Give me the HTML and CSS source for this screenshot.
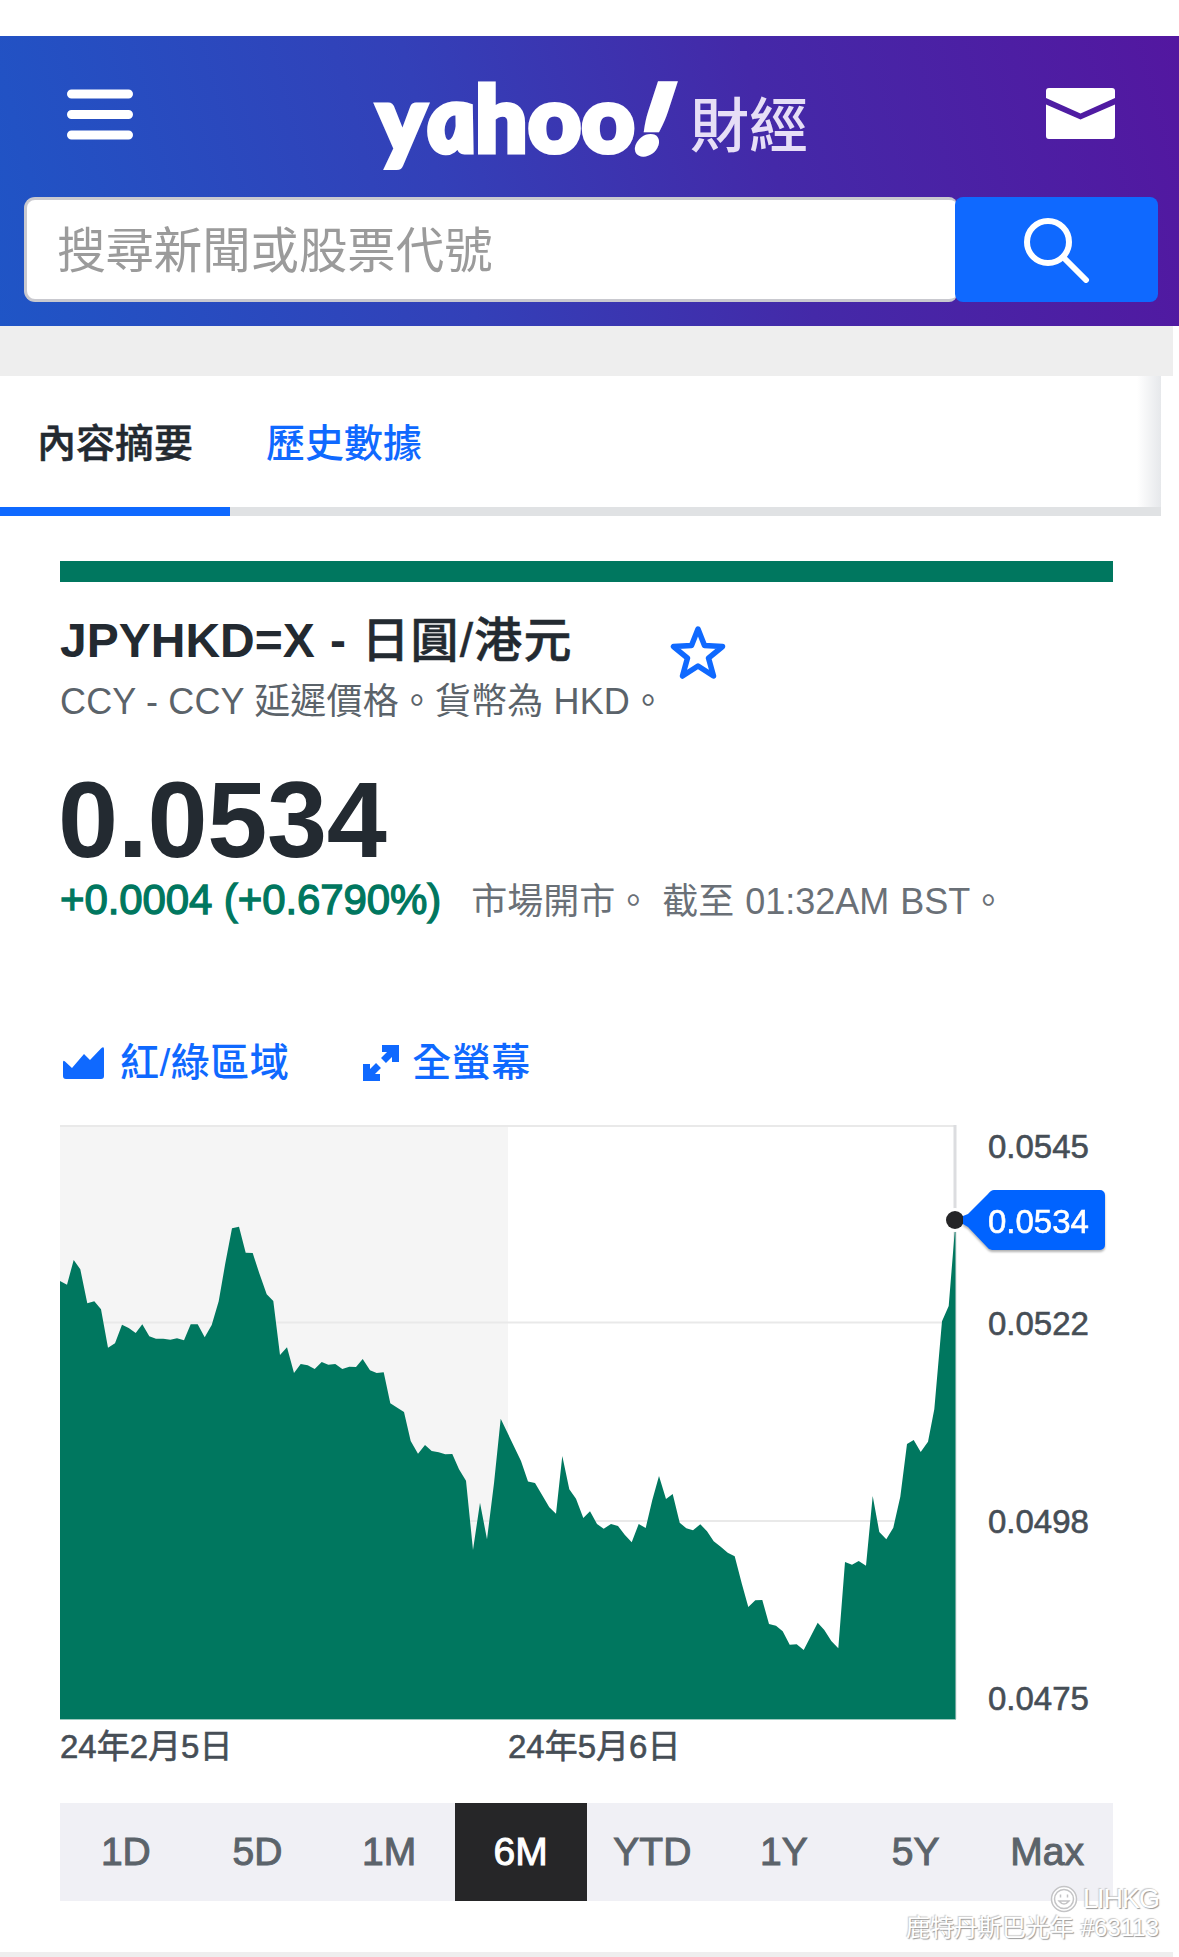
FILE: index.html
```html
<!DOCTYPE html>
<html lang="zh-Hant-HK">
<head>
    <meta charset="UTF-8">
    <meta name="viewport" content="width=device-width, initial-scale=1.0">
    <title>JPYHKD=X - 日圓/港元</title>
    <link rel="stylesheet" href="styles.css">
</head>
<body>
    <header class="header">
        <div class="topbar">
            <svg class="menu-icon" width="66" height="51" viewBox="0 0 66 51">
                <path d="M4.5 5h57M4.5 25.5h57M4.5 46h57" stroke="#fff" stroke-width="9" stroke-linecap="round"/>
            </svg>
            <div class="logo">
                <span class="logo-name">y<span class="logo-a">a</span>hoo<span class="logo-bang">!</span></span>
                <span class="logo-section">財經</span>
            </div>
            <svg class="mail-icon" width="69" height="51" viewBox="0 0 69 51">
                <path d="M3 0h63a3 3 0 0 1 3 3v7L34.500 25.500 0 10V3a3 3 0 0 1 3-3z" fill="#fff"/>
                <path d="M0 16.500 34.500 31.500 69 16.500V48a3 3 0 0 1-3 3H3a3 3 0 0 1-3-3z" fill="#fff"/>
            </svg>
        </div>
        <form class="search">
            <input class="search-input" type="text" placeholder="搜尋新聞或股票代號">
            <button class="search-button" type="button">
                <svg width="66" height="66" viewBox="0 0 66 66" fill="none" stroke="#fff" stroke-width="6">
                    <circle cx="24" cy="25" r="21"/>
                    <path d="M39 40 62 63" stroke-linecap="round"/>
                </svg>
            </button>
        </form>
    </header>

    <div class="ad-strip"></div>

    <nav class="tabs">
        <a class="tab active">內容摘要</a>
        <a class="tab">歷史數據</a>
    </nav>

    <main class="quote">
        <div class="status-bar"></div>

        <div class="quote-head">
            <div class="quote-title">
                <h1>JPYHKD=X - <span class="pair">日圓/港元</span></h1>
                <p class="exchange">CCY - CCY 延遲價格。貨幣為 HKD。</p>
            </div>
            <svg class="star" width="56" height="56" viewBox="0 0 56 56">
                <path d="M28 4 34.500 20.500 52.500 21.500 38.500 33 43.500 51 28 41 12.500 51 17.500 33 3.500 21.500 21.500 20.500z" fill="none" stroke="#0f69ff" stroke-width="5.5" stroke-linejoin="round"/>
            </svg>
        </div>

        <div class="price">0.0534</div>
        <div class="change-row">
            <span class="change">+0.0004 (+0.6790%)</span>
            <span class="market-time">市場開市。 截至 01:32AM BST。</span>
        </div>

        <div class="chart-tools">
            <a class="tool">
                <svg width="41" height="36" viewBox="0 0 41 36">
                    <path d="M0 17.500Q0 14.500 2 16.500L9 23 21 9l6 6L38 3.500Q41 1 41 4v27q0 3-3 3H3q-3 0-3-3z" fill="#0f69ff"/>
                </svg>
                紅/綠區域
            </a>
            <a class="tool tool-full">
                <svg width="36" height="36" viewBox="0 0 36 36" fill="none" stroke="#0f69ff" stroke-width="7">
                    <path d="M19 3.500H32.500V17M32 4 20.500 15.500"/>
                    <path d="M17 32.500H3.500V19M4 32 15.500 20.500"/>
                </svg>
                全螢幕
            </a>
        </div>

        <div class="chart">
            <div>
                <svg class="plot" width="910" height="595" viewBox="0 0 910 595">
                    <rect width="448" height="594" fill="#f5f5f5"/>
                    <path d="M0 1h895M0 197.500h895M0 396h895" stroke="#e9e9e9" stroke-width="2"/>
                    <path d="M895 0v594" stroke="#dcdde0" stroke-width="3"/>
                    <path d="M0 594.500h896" stroke="#9ccabf" stroke-width="1"/>
                    <polygon fill="#00775f" points="0,594 0,156 7,159.7 13.7,135 20.3,144.3 27.3,178.3 34.3,176.3 41,184.3 48,222.7 55,218.3 62,199.7 68.7,203 75.7,208 82.3,199.3
                        89.3,211.3 96,213.7 103.3,213.7 110.3,214.7 117,213.3 124,215.3 130.7,199.3 137.7,199.3 144.7,212.3 151.7,200 158.7,176.3 165.3,138.3 172,103.3 179,101.7
                        185.7,127.7 192.7,128 199.3,148.3 206.7,169.3 213.3,176 220,230 227,222.3 234,248 240.7,239 247.7,240.3 254.7,244 261.7,237 268.3,239.7 275.3,239 282.3,244
                        289.3,241.7 296,242 302.7,234 310,245.3 316.7,248 323.7,247.3 330.3,278.3 337.3,282.7 344,287 350.7,316 358,328.7 365,320 371.7,326 378.7,327.3 385.3,329.3
                        392.3,329 399,344.3 406,355.7 413,425 420,377.7 427,414.3 434,358.3 440.7,293.7 447.7,308.3 461,336 468,356.5 475,358 489.3,382.3 496,388.7 502.3,331
                        509.3,364.3 516,373.7 523.3,393 530,386.3 537,399 543.7,403.7 551,399 558,401 564.7,409.7 571.7,417.3 578.7,399 585.7,403 592.3,375 599,351 606,374
                        612.7,369 619.7,397.7 626.3,403.3 633,405.3 640.3,399.3 647,406.3 653.7,416.3 660.7,421.7 667.7,427.7 674.7,431.3 681.7,458.3 688.3,482 695.3,475.3
                        702.3,475 709,499 716,500.7 722.7,506.3 729.7,519.7 736.7,519.3 743.7,525 757.7,497.7 764.3,505 771.3,516 778.3,523.3 785,437 792,439.7 798.7,436
                        806,440.7 812.7,371 819.3,407 826.3,414.3 833.3,402.7 840.3,371.7 847,319 853.7,315 860.7,327 868,316.7 874.3,284.3 882,196.3 888.7,181 895.500,97 895.500,594"/>
                    <circle cx="895" cy="95" r="12" fill="#fff"/>
                    <circle cx="895" cy="95" r="9" fill="#262628"/>
                </svg>
                <div class="x-axis">
                    <span>24年2月5日</span>
                    <span>24年5月6日</span>
                </div>
            </div>
            <div class="y-axis">
                <span>0.0545</span>
                <span>0.0522</span>
                <span>0.0498</span>
                <span>0.0475</span>
            </div>
            <div class="price-flag">
                <svg width="144" height="62" viewBox="0 0 144 62">
                    <path d="M31 0H137a5 5 0 0 1 5 5v50a5 5 0 0 1-5 5H29q-3 0-5-3L5 37 0 34V26l5-2L25 4q3-4 6-4z" fill="#0063ff"/>
                </svg>
                <span class="flag-value">0.0534</span>
            </div>
        </div>

        <div class="ranges">
            <a class="range">1D</a>
            <a class="range">5D</a>
            <a class="range">1M</a>
            <a class="range selected">6M</a>
            <a class="range">YTD</a>
            <a class="range">1Y</a>
            <a class="range">5Y</a>
            <a class="range">Max</a>
        </div>
    </main>

    <div class="bottom-strip"></div>

    <div class="watermark">
        <div class="watermark-brand">
            <svg width="28" height="28" viewBox="0 0 28 28" fill="none" stroke="#c4c4c6" stroke-width="1.5">
                <circle cx="14" cy="14" r="12.500" fill="#fff"/>
                <circle cx="14" cy="14" r="9.500"/>
                <path d="M10.500 9.500v3M17.500 9.500v3M9 16q5 6 10 0z"/>
            </svg>
            LIHKG
        </div>
        <div class="watermark-user">鹿特丹斯巴光年 #63113</div>
    </div>
</body>
</html>
```
FILE: styles.css
```css
body {
    margin: 0;
    height: 1957px;
    padding-top: 36px;
    box-sizing: border-box;
    position: relative;
    overflow: hidden;
    background-color: #fff;
    color: #232a31;
    font-family: "Liberation Sans", "Noto Sans CJK TC", sans-serif;
}

/* Header */
.header {
    height: 290px;
    background: linear-gradient(75deg, #1f55c6 0%, #3340b8 38%, #4429a8 65%, #5317a0 100%);
}

.topbar {
    height: 161px;
    padding: 0 64px 0 67px;
    display: flex;
    justify-content: space-between;
    align-items: flex-start;
}

.menu-icon {
    margin-top: 53px;
}

.mail-icon {
    margin-top: 52px;
}

.logo {
    display: flex;
    align-items: flex-start;
    margin: 24px 0 0 6px;
    gap: 6px;
    color: #fff;
}

.logo-name {
    width: 307px;
    margin-top: 2px;
    white-space: nowrap;
    font-family: Lato, sans-serif;
    font-size: 92px;
    font-weight: 900;
    line-height: 110px;
    letter-spacing: 0.500px;
    -webkit-text-stroke: 5px #fff;
}

.logo-a {
    display: inline-block;
    font-style: italic;
    transform: skewX(8deg);
}

.logo-bang {
    display: inline-block;
    margin-left: 8px;
    transform: skewX(-18deg);
    -webkit-text-stroke: 8px #fff;
}

.logo-section {
    margin-top: 32px;
    font-size: 59px;
    font-weight: 500;
    font-family: "Noto Sans CJK TC", sans-serif;
    line-height: 60px;
    color: #e6def6;
}

.search {
    display: flex;
    margin: 0 21px 0 24px;
    height: 105px;
}

.search-input {
    flex: 1;
    min-width: 0;
    box-sizing: border-box;
    padding: 0 0 6px 30px;
    border: 3px solid #c9c9cf;
    border-right: none;
    border-radius: 11px 8px 8px 11px;
    background-color: #fff;
    font-family: "Noto Sans CJK TC", sans-serif;
    font-size: 48.400px;
}

.search-input::placeholder {
    color: #9b9b9b;
}

.search-button {
    width: 203px;
    margin-left: -2px;
    padding: 0;
    display: flex;
    align-items: center;
    justify-content: center;
    border: none;
    border-radius: 8px;
    background-color: #0f69ff;
}

.ad-strip {
    width: 1173px;
    height: 50px;
    background-color: #eee;
}

/* Tabs */
.tabs {
    display: flex;
    width: 1161px;
    height: 140px;
    box-sizing: border-box;
    background: linear-gradient(to right, rgba(230, 232, 235, 0), #e6e8eb) right top / 24px 131px no-repeat;
    box-shadow: inset 0 -9px #e0e2e4;
}

.tab {
    padding: 0 36px;
    border-bottom: 9px solid transparent;
    font-size: 39px;
    font-weight: 500;
    line-height: 136px;
    height: 131px;
    color: #0f69ff;
}

.tab.active {
    padding: 0 37px;
    border-color: #0f69ff;
    color: #232a31;
    -webkit-text-stroke: 0.500px #232a31;
}

/* Quote */
.quote {
    width: 1053px;
    margin: 45px 0 0 60px;
}

.status-bar {
    height: 21px;
    background-color: #00775f;
}

.quote-head {
    display: flex;
    gap: 13px;
    height: 186px;
    padding-top: 29px;
    box-sizing: border-box;
}

.quote-title {
    width: 597px;
}

h1 {
    margin: 0;
    font-size: 48px;
    line-height: 60px;
    font-weight: bold;
    white-space: nowrap;
    word-spacing: 2px;
}

.pair {
    font-weight: 500;
    letter-spacing: 1.2px;
    -webkit-text-stroke: 0.500px #232a31;
}

.exchange {
    margin: 0;
    font-size: 36px;
    line-height: 62px;
    letter-spacing: 0.150px;
    color: #5b636a;
    white-space: nowrap;
}

.star {
    margin-top: 14px;
}

.price {
    height: 104px;
    margin-left: -2px;
    font-size: 108px;
    line-height: 104px;
    font-weight: bold;
    letter-spacing: -0.300px;
}

.change-row {
    display: flex;
    gap: 30px;
    align-items: baseline;
    height: 56px;
    line-height: 56px;
    white-space: nowrap;
}

.change {
    font-size: 42px;
    letter-spacing: -0.100px;
    color: #00775f;
    -webkit-text-stroke: 1.3px #00775f;
}

.market-time {
    font-size: 36px;
    word-spacing: 1px;
    color: #6a7077;
}

.chart-tools {
    display: flex;
    gap: 74px;
    height: 197px;
    padding: 109px 0 0 3px;
    box-sizing: border-box;
}

.tool {
    display: flex;
    align-items: center;
    gap: 16px;
    height: 52px;
    color: #0f69ff;
    font-size: 39px;
    font-weight: 500;
    letter-spacing: 0.500px;
    line-height: 52px;
}

.tool-full {
    gap: 13px;
}

/* Chart */
.chart {
    display: flex;
    position: relative;
    height: 678px;
}

.plot {
    display: block;
}

.x-axis {
    display: flex;
    font-size: 33px;
    line-height: 54px;
    color: #464e56;
    -webkit-text-stroke: 0.600px #464e56;
}

.x-axis span {
    width: 448px;
}

.y-axis {
    display: grid;
    grid-template-rows: 177px 198px 177px 42px;
    padding: 1px 0 0 18px;
    align-content: start;
    font-size: 33px;
    line-height: 42px;
    color: #464e56;
    -webkit-text-stroke: 0.600px #464e56;
}

.price-flag {
    position: absolute;
    left: 903px;
    top: 65px;
    width: 144px;
    height: 62px;
    filter: drop-shadow(0 2px 1px rgba(0, 0, 0, 0.3));
}

.flag-value {
    position: absolute;
    left: 25px;
    top: 11px;
    font-size: 33px;
    line-height: 42px;
    color: #fff;
    -webkit-text-stroke: 0.600px #fff;
}

/* Range selector */
.ranges {
    display: flex;
    height: 98px;
    background-color: #f0f0f5;
}

.range {
    flex: 1;
    text-align: center;
    font-size: 39px;
    line-height: 98px;
    color: #5b636a;
    -webkit-text-stroke: 1px #5b636a;
}

.range.selected {
    background-color: #262628;
    color: #fff;
    -webkit-text-stroke-color: #fff;
}

.bottom-strip {
    width: 1173px;
    height: 5px;
    margin-top: 51px;
    background-color: #eee;
}

/* Forum stamp over the corner */
.watermark {
    position: absolute;
    right: 20px;
    bottom: 15px;
    color: #fff;
    text-align: right;
    text-shadow: 1px 1px 1px #999, -1px -1px 1px #ccc;
}

.watermark-brand {
    display: flex;
    align-items: center;
    justify-content: flex-end;
    gap: 5px;
    font-size: 27px;
    line-height: 30px;
    letter-spacing: -1px;
}

.watermark-user {
    font-size: 24px;
    line-height: 28px;
}
```
